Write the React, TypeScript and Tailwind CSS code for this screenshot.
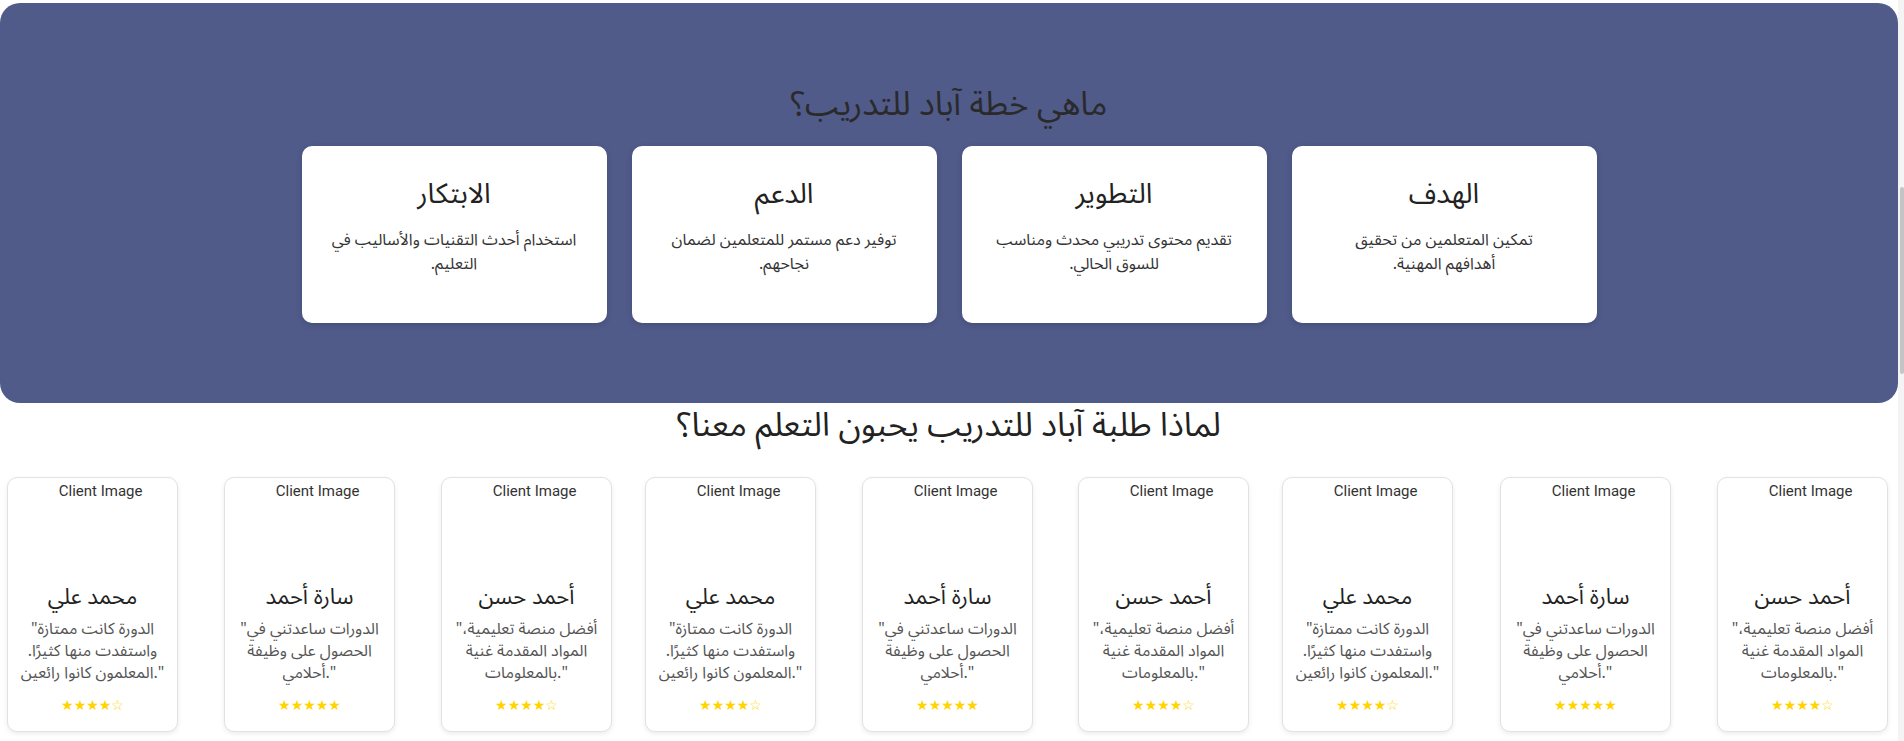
const plan = [
  { title: "الهدف", lines: ["تمكين المتعلمين من تحقيق", "أهدافهم المهنية."] },
  { title: "التطوير", lines: ["تقديم محتوى تدريبي محدث ومناسب", "للسوق الحالي."] },
  { title: "الدعم", lines: ["توفير دعم مستمر للمتعلمين لضمان", "نجاحهم."] },
  { title: "الابتكار", lines: ["استخدام أحدث التقنيات والأساليب في", "التعليم."] },
];

const people = {
  ali: {
    name: "محمد علي",
    quote: "\"الدورة كانت ممتازة واستفدت منها كثيرًا. المعلمون كانوا رائعين.\"",
    stars: "★★★★☆",
  },
  sara: {
    name: "سارة أحمد",
    quote: "\"الدورات ساعدتني في الحصول على وظيفة أحلامي.\"",
    stars: "★★★★★",
  },
  hasan: {
    name: "أحمد حسن",
    quote: "\"أفضل منصة تعليمية، المواد المقدمة غنية بالمعلومات.\"",
    stars: "★★★★☆",
  },
};

type Person = (typeof people)["ali"];

// left to right, as they sit on screen (the slider is rtl)
const slides = [
  { p: people.ali, gap: "ml-0" },
  { p: people.sara, gap: "ml-[46px]" },
  { p: people.hasan, gap: "ml-[46px]" },
  { p: people.ali, gap: "ml-[33px]" },
  { p: people.sara, gap: "ml-[46px]" },
  { p: people.hasan, gap: "ml-[45px]" },
  { p: people.ali, gap: "ml-[33px]" },
  { p: people.sara, gap: "ml-[47px]" },
  { p: people.hasan, gap: "ml-[46px]" },
];

const arabic = "font-['Noto_Sans_Arabic','DejaVu_Sans',sans-serif]";

function PlanCard({ title, lines }: { title: string; lines: string[] }) {
  return (
    <div className="flex h-[177px] w-[305px] flex-col items-center rounded-[10px] bg-white px-[20px] pt-[32px] text-center shadow-[0_2px_6px_rgba(0,0,0,0.15)]">
      <h3 className="text-[28px] leading-[34px] text-[#222]">{title}</h3>
      <p className="mt-[16px] text-[16px] leading-[24px] whitespace-nowrap text-[#333]">
        {lines[0]}
        <br />
        {lines[1]}
      </p>
    </div>
  );
}

function Testimonial({ p }: { p: Person }) {
  return (
    <div className="flex h-[255px] w-[171px] shrink-0 flex-col items-center rounded-[10px] border border-[#e2e2e2] bg-white pt-[2px] text-center shadow-[0_2px_5px_rgba(0,0,0,0.08)]">
      <div className="mx-auto h-[100px] w-[100px] shrink-0 text-right font-['Roboto',sans-serif] text-[15px] leading-[22px] whitespace-nowrap text-[#333]" dir="rtl">
        Client Image
      </div>
      <h4 className="mt-[3px] text-[22px] leading-[29px] text-[#222]" dir="rtl">{p.name}</h4>
      <p className="mt-[6px] w-[151px] text-[16px] leading-[22px] text-[#555]" dir="ltr">
        {p.quote}
      </p>
      <div className="mt-[12px] text-[14px] leading-[20px] text-[#ffd400]">{p.stars}</div>
    </div>
  );
}

export default function App() {
  return (
    <div className={`flex h-[741px] w-full overflow-hidden bg-white ${arabic}`}>
      <div className="min-w-0 flex-1">
        <section dir="rtl" className="mt-[3px] flex h-[400px] flex-col items-center rounded-[20px] bg-[#505b8a] pt-[82px]">
          <h2 className="text-[33px] leading-[40px] text-[#2a2a2a]">ماهي خطة آباد للتدريب؟</h2>
          <div className="mt-[21px] flex justify-center gap-[25px]">
            {plan.map((c) => (
              <PlanCard key={c.title} title={c.title} lines={c.lines} />
            ))}
          </div>
        </section>

        <h2 dir="rtl" className="mt-[3px] text-center text-[33px] leading-[40px] text-[#222]">
          لماذا طلبة آباد للتدريب يحبون التعلم معنا؟
        </h2>

        <div className="mt-[31px] flex pl-[7px]">
          {slides.map((s, i) => (
            <div key={i} className={s.gap}>
              <Testimonial p={s.p} />
            </div>
          ))}
        </div>
      </div>

      <div className="w-[6px] shrink-0 bg-[#f4f4f4] pt-[187px]">
        <div className="ml-auto h-[187px] w-[4px] rounded-[2px] bg-[#c4c4c4]" />
      </div>
    </div>
  );
}
